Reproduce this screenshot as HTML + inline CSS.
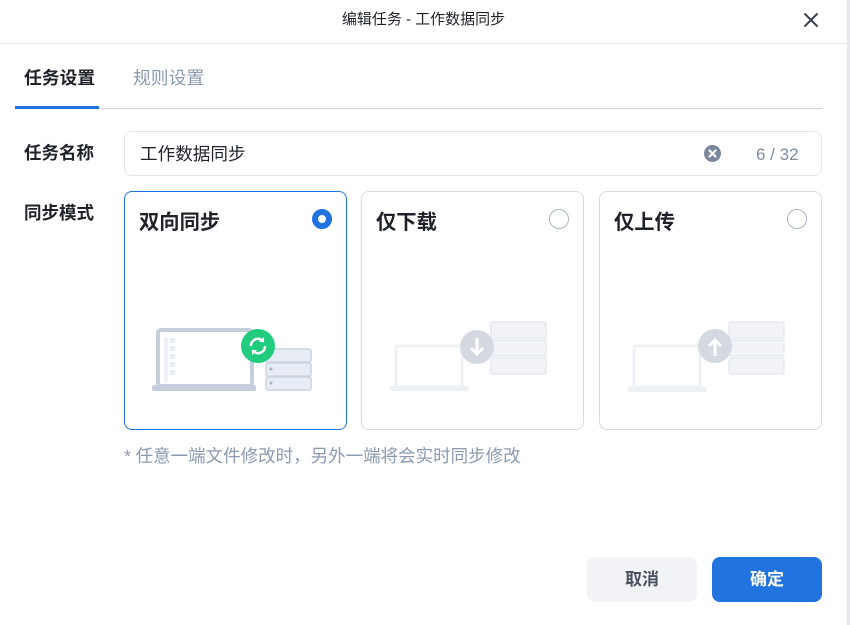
<!DOCTYPE html>
<html><head><meta charset="utf-8"><style>
*{margin:0;padding:0;box-sizing:border-box}
body{width:850px;height:625px;background:#fff;position:relative;overflow:hidden;font-family:"Liberation Sans","Noto Sans CJK SC",sans-serif;color:#1f2329}
.a{position:absolute;line-height:1.2}
.card{position:absolute;top:191px;width:223px;height:239px;border:1px solid #d5dae3;border-radius:8px;background:#fff}
.card.sel{border-color:#2173df}
.card .t{position:absolute;left:14px;top:19px;font-size:20.3px;font-weight:bold;color:#1f2329;line-height:1.2}
.radio{position:absolute;right:14px;top:17px;width:20px;height:20px;border-radius:50%;border:1px solid #a9b5c6;background:#fff}
.radio.on{border:6px solid #2173df}
</style></head><body>
<div class="a" style="left:847px;top:0;width:3px;height:625px;background:#e6e8ec"></div>
<div class="a" style="left:0;top:0;width:847px;height:44px;border-bottom:1px solid #e4e7ec;text-align:center;line-height:40px;font-size:15px;color:#1f2329">编辑任务 - 工作数据同步</div>
<svg class="a" style="left:803px;top:12px" width="16" height="16" viewBox="0 0 16 16"><path d="M2 2L14 14M14 2L2 14" stroke="#3a4250" stroke-width="2" stroke-linecap="round"/></svg>
<div class="a" style="left:24px;top:68px;font-size:17.8px;font-weight:bold;color:#1f2329">任务设置</div>
<div class="a" style="left:133px;top:68px;font-size:17.8px;color:#8a9ab0">规则设置</div>
<div class="a" style="left:15px;top:108px;width:807px;height:1px;background:#cdd5df"></div>
<div class="a" style="left:15px;top:106px;height:3px;background:#2173df;width:84px"></div>
<div class="a" style="left:24px;top:143px;font-size:17.5px;font-weight:bold">任务名称</div>
<div class="a" style="left:24px;top:203px;font-size:17.5px;font-weight:bold">同步模式</div>
<div class="a" style="left:124px;top:131px;width:698px;height:45px;border:1px solid #e2e6ec;border-radius:8px"></div>
<div class="a" style="left:140px;top:144px;font-size:17.6px;color:#1f2329">工作数据同步</div>
<svg class="a" style="left:704px;top:145px" width="17" height="17" viewBox="0 0 17 17"><circle cx="8.5" cy="8.5" r="8.5" fill="#7b889c"/><path d="M5.5 5.5L11.5 11.5M11.5 5.5L5.5 11.5" stroke="#fff" stroke-width="2.2" stroke-linecap="round"/></svg>
<div class="a" style="left:756px;top:145px;font-size:17px;color:#7f8da2">6 / 32</div>
<div class="card sel" style="left:124px"><div class="t">双向同步</div><div class="radio on"></div></div>
<div class="card" style="left:361px"><div class="t">仅下载</div><div class="radio"></div></div>
<div class="card" style="left:599px"><div class="t">仅上传</div><div class="radio"></div></div>
<svg class="a" style="left:0;top:0" width="850" height="625">
<rect x="158" y="330" width="94" height="56" rx="3" fill="#fff" stroke="#c5cfdc" stroke-width="4"/>
<rect x="164" y="337" width="4" height="46" fill="#eef1f7"/>
<g fill="#e6ebf4"><rect x="170" y="338" width="5" height="5"/><rect x="170" y="346" width="5" height="5"/><rect x="170" y="354" width="5" height="5"/><rect x="170" y="362" width="5" height="5"/><rect x="170" y="370" width="5" height="5"/></g>
<rect x="152" y="385" width="104" height="6" rx="2" fill="#c5cfdc"/>
<g fill="#e8edf5" stroke="#c9d3e1" stroke-width="1.5"><rect x="266" y="349" width="45" height="13" rx="2"/><rect x="266" y="363" width="45" height="13" rx="2"/><rect x="266" y="377" width="45" height="13" rx="2"/></g>
<g fill="#a7b3c4"><circle cx="271" cy="369" r="1.5"/><circle cx="271" cy="383" r="1.5"/></g>
<circle cx="258" cy="346" r="17" fill="#22cc7f"/>
<path d="M251 345a7 7 0 0 1 12-4M265 347a7 7 0 0 1-12 4" stroke="#fff" stroke-width="2.5" fill="none" stroke-linecap="round"/>
<path d="M264 337v5h-5zM252 355v-5h5z" fill="#fff"/>
<rect x="396" y="346" width="66" height="41" rx="2" fill="#fff" stroke="#eef1f6" stroke-width="3"/>
<rect x="390" y="386" width="79" height="5" rx="2" fill="#edf0f5"/>
<g fill="#f1f3f7" stroke="#e6eaf0" stroke-width="1.5"><rect x="491" y="322" width="55" height="16" rx="2"/><rect x="491" y="340" width="55" height="16" rx="2"/><rect x="491" y="358" width="55" height="16" rx="2"/></g>
<circle cx="477" cy="347" r="17" fill="#d4d9e1"/>
<path d="M477 338v15M471 348l6 6 6-6" stroke="#fff" stroke-width="3" fill="none"/>
<rect x="634" y="346" width="66" height="41" rx="2" fill="#fff" stroke="#eef1f6" stroke-width="3"/>
<rect x="628" y="387" width="79" height="5" rx="2" fill="#edf0f5"/>
<g fill="#f1f3f7" stroke="#e6eaf0" stroke-width="1.5"><rect x="729" y="322" width="55" height="16" rx="2"/><rect x="729" y="340" width="55" height="16" rx="2"/><rect x="729" y="358" width="55" height="16" rx="2"/></g>
<circle cx="715" cy="346" r="17" fill="#d4d9e1"/>
<path d="M715 356v-15M709 346l6-6 6 6" stroke="#fff" stroke-width="3" fill="none"/>
</svg>
<div class="a" style="left:124px;top:446px;font-size:17.5px;color:#8a9ab0">* 任意一端文件修改时，另外一端将会实时同步修改</div>
<div class="a" style="left:587px;top:557px;width:110px;height:45px;border-radius:8px;background:#f1f3f6;color:#4a5260;font-size:17px;font-weight:bold;text-align:center;line-height:45px">取消</div>
<div class="a" style="left:712px;top:557px;width:110px;height:45px;border-radius:8px;background:#2173df;color:#fff;font-size:17px;font-weight:bold;text-align:center;line-height:45px">确定</div>
</body></html>
